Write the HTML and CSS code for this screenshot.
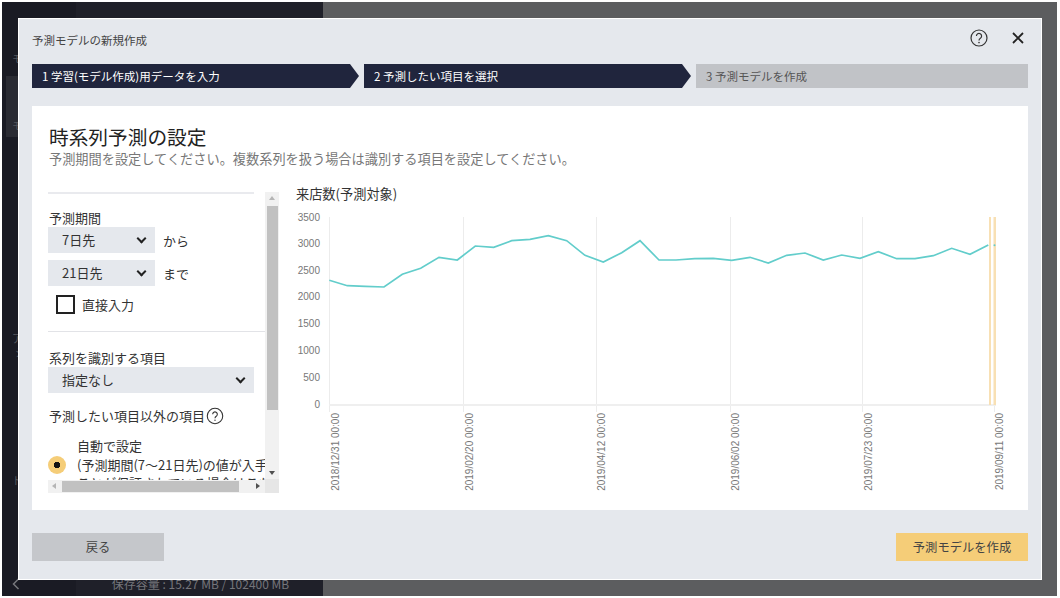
FILE: index.html
```html
<!DOCTYPE html>
<html lang="ja">
<head>
    <meta charset="UTF-8">
    <meta name="viewport" content="width=device-width, initial-scale=1.0">
    <title>予測モデルの新規作成</title>
    <link rel="stylesheet" href="styles.css">
</head>
<body>
    <div class="backdrop">
        <div class="rail">
            <div class="rail-label rail-top">モ</div>
            <div class="rail-active"><div class="rail-label">モ</div></div>
            <div class="rail-label rail-app">ア</div>
            <div class="rail-label rail-sub">シ</div>
            <div class="rail-label rail-doc">ド</div>
            <svg class="rail-back" width="8" height="12" viewBox="0 0 8 12">
                <path d="M6.5 1L1.5 6l5 5" fill="none" stroke="#77787d" stroke-width="1.5"/>
            </svg>
        </div>
        <div class="side">
            <div class="storage">保存容量 : 15.27 MB / 102400 MB</div>
        </div>
        <div class="main"></div>
    </div>

    <div class="dialog">
        <div class="dialog-head">
            <div class="dialog-title">予測モデルの新規作成</div>
            <svg class="help" width="20" height="20" viewBox="0 0 20 20">
                <circle cx="10" cy="10" r="8" fill="none" stroke="#333" stroke-width="1.2"/>
                <path d="M7.4 8a2.6 2.6 0 1 1 4 2.2c-.9.6-1.4 1-1.4 2.2" fill="none" stroke="#333" stroke-width="1.2"/>
                <circle cx="10" cy="14.6" r=".8" fill="#333"/>
            </svg>
            <svg class="close" width="14" height="14" viewBox="0 0 14 14">
                <path d="M2 2l10 10M12 2L2 12" stroke="#222" stroke-width="1.8"/>
            </svg>
        </div>

        <div class="steps">
            <div class="step step-done">1 学習(モデル作成)用データを入力</div>
            <div class="step step-done">2 予測したい項目を選択</div>
            <div class="step step-todo">3 予測モデルを作成</div>
        </div>

        <div class="panel">
            <h1>時系列予測の設定</h1>
            <p class="lead">予測期間を設定してください。複数系列を扱う場合は識別する項目を設定してください。</p>

            <div class="panel-body">
                <div class="form-col">
                    <div class="form-inner">
                        <div class="rule rule-short"></div>
                        <div class="label label-first">予測期間</div>
                        <div class="range-row">
                            <div class="select select-small">7日先<span class="chev"></span></div>
                            <span>から</span>
                        </div>
                        <div class="range-row">
                            <div class="select select-small">21日先<span class="chev"></span></div>
                            <span>まで</span>
                        </div>
                        <div class="check-row">
                            <span class="checkbox"></span>
                            <span>直接入力</span>
                        </div>
                        <div class="rule rule-thin"></div>
                        <div class="label label-series">系列を識別する項目</div>
                        <div class="select select-wide">指定なし<span class="chev"></span></div>
                        <div class="label label-other">予測したい項目以外の項目
                            <svg width="18" height="18" viewBox="0 0 20 20">
                                <circle cx="10" cy="10" r="8.6" fill="none" stroke="#333" stroke-width="1.2"/>
                                <path d="M7.4 8a2.6 2.6 0 1 1 4 2.2c-.9.6-1.4 1-1.4 2.2" fill="none" stroke="#333" stroke-width="1.2"/>
                                <circle cx="10" cy="14.6" r=".8" fill="#333"/>
                            </svg>
                        </div>
                        <div class="radio-row">
                            <span class="radio"></span>
                            <div class="radio-text">自動で設定<br>(予測期間(7〜21日先)の値が入手できる<br>ことが保証されている場合はこちら)</div>
                        </div>
                    </div>

                    <div class="vbar">
                        <span class="arrow-up"></span>
                        <span class="vthumb"></span>
                        <span class="arrow-down"></span>
                    </div>
                    <div class="hbar">
                        <span class="arrow-left"></span>
                        <span class="hthumb"></span>
                        <span class="arrow-right"></span>
                    </div>
                    <div class="corner"></div>
                </div>

                <div class="chart-col">
                    <div class="chart-title">来店数(予測対象)</div>
                    <svg class="chart" width="710" height="290" viewBox="296 205 710 290">
                        <g stroke="#ececec" stroke-width="1">
                            <path d="M329.5 217V412M463.5 217V412M596.5 217V412M730.5 217V412M862.5 217V412M994.5 217V412"/>
                        </g>
                        <path d="M329 405H996" stroke="#efefef" stroke-width="2"/>
                        <rect x="989" y="217" width="2" height="188" fill="#f8e0b4"/>
                        <rect x="993.5" y="217" width="2.5" height="188" fill="#f8e0b4"/>
                        <polyline class="series" points="329.3,280.3 347.3,285.7 365.3,286.3 384,287 402.3,274.3 420.7,268.3 439,257.3 457.3,260 475.3,246 493.7,247.3 511.7,240.7 530,239.3 548.3,235.7 566.7,240.7 585,255.3 603.3,262 621.7,252.7 640,240.7 659,260 676,260 694.7,258.7 713.3,258.3 731.7,260.3 750,257.3 768.3,263 786.7,255.3 805,253 823.3,260 841.7,255 860,258.3 878.3,251.7 896.7,258.7 915,258.7 933.3,255.7 951.7,248.3 970,254.3 988.3,245"/>
                        <circle cx="994.5" cy="245.3" r="1" fill="#62cdcb"/>
                        <g class="y-labels">
                            <text x="320" y="220.5">3500</text>
                            <text x="320" y="246.5">3000</text>
                            <text x="320" y="273.5">2500</text>
                            <text x="320" y="300">2000</text>
                            <text x="320" y="327">1500</text>
                            <text x="320" y="354">1000</text>
                            <text x="320" y="381">500</text>
                            <text x="320" y="408">0</text>
                        </g>
                        <g class="x-labels">
                            <text transform="translate(338.5 413) rotate(-90)">2018/12/31 00:00</text>
                            <text transform="translate(472.5 413) rotate(-90)">2019/02/20 00:00</text>
                            <text transform="translate(605 413) rotate(-90)">2019/04/12 00:00</text>
                            <text transform="translate(739 413) rotate(-90)">2019/06/02 00:00</text>
                            <text transform="translate(871.5 413) rotate(-90)">2019/07/23 00:00</text>
                            <text transform="translate(1002.5 413) rotate(-90)">2019/09/11 00:00</text>
                        </g>
                    </svg>
                </div>
            </div>
        </div>

        <div class="dialog-foot">
            <div class="btn btn-back">戻る</div>
            <div class="btn btn-primary">予測モデルを作成</div>
        </div>
    </div>
</body>
</html>
```

FILE: styles.css
```css
* {
    box-sizing: border-box;
}

body {
    margin: 0;
    width: 1060px;
    height: 598px;
    overflow: hidden;
    background-color: #fff;
    font-family: 'Noto Sans CJK JP', 'Noto Sans', sans-serif;
    font-size: 13px;
    color: #333;
}

/* page behind the dialog */
.backdrop {
    display: flex;
    height: 594px;
    width: 1055px;
    margin: 2px 0 0 2px;
}

.rail {
    width: 74px;
    background-color: #1a1b24;
    padding-top: 48px;
    display: flex;
    flex-direction: column;
}

.rail-label {
    font-size: 11px;
    line-height: 16px;
    padding-left: 10px;
    color: #55565c;
}

.rail-active {
    width: 74px;
    height: 61px;
    margin: 10px 0 0 4px;
    padding-top: 41px;
    background-color: #2a2b33;
}

.rail-active .rail-label {
    padding-left: 6px;
}

.rail-app {
    margin-top: 193px;
}

.rail-sub {
    margin-top: -2px;
    padding-left: 13px;
}

.rail-doc {
    margin-top: 112px;
}

.rail-back {
    margin: auto 0 6px 10px;
}

.side {
    width: 247px;
    background-color: #1f2029;
    display: flex;
    align-items: flex-end;
    justify-content: center;
}

.storage {
    font-size: 12px;
    line-height: 16px;
    margin-bottom: 4px;
    margin-left: 2px;
    color: #74757b;
}

.main {
    flex: 1;
    background-color: #5c5d5f;
}

/* dialog */
.dialog {
    position: absolute;
    left: 18px;
    top: 18px;
    width: 1024px;
    height: 562px;
    padding: 0 13px;
    border: 1px solid #fff;
    background-color: #e5e8ed;
    display: flex;
    flex-direction: column;
}

.dialog-head {
    height: 45px;
    display: flex;
    align-items: center;
}

.dialog-title {
    font-size: 11.5px;
    color: #444;
    flex: 1;
    margin-top: -3px;
}

.help {
    margin-right: 22px;
    margin-top: -8px;
}

.close {
    margin-right: 3px;
    margin-top: -8px;
}

.steps {
    display: flex;
    gap: 5px;
    height: 24px;
}

.step {
    font-size: 11.5px;
    line-height: 25px;
    padding-left: 10px;
}

.step-done {
    width: 327px;
    color: #fff;
    background-color: #20253d;
    clip-path: polygon(0 0, 318px 0, 100% 50%, 318px 100%, 0 100%);
}

.step-todo {
    flex: 1;
    color: #555;
    background-color: #c1c3c7;
}

.panel {
    height: 404px;
    margin-top: 18px;
    padding: 18px 16px 0;
    background-color: #fff;
}

h1 {
    margin: 0;
    font-size: 19.7px;
    font-weight: 400;
    line-height: 26px;
    padding-left: 1px;
    color: #222;
}

.lead {
    margin: 0;
    font-size: 13.2px;
    line-height: 18px;
    padding-left: 1px;
    color: #777;
}

.panel-body {
    display: flex;
    margin-top: 17px;
}

/* left form, scrolled */
.form-col {
    position: relative;
    width: 231px;
    height: 301px;
    margin-top: 7px;
    overflow: hidden;
    flex-shrink: 0;
}

.form-inner {
    width: 217px;
    height: 288px;
    overflow: hidden;
    white-space: nowrap;
}

.rule {
    height: 2px;
    background-color: #e9eaee;
}

.rule-short {
    width: 206px;
}

.rule-thin {
    height: 1px;
    background-color: #e2e3e7;
}

.label {
    padding-left: 1px;
    line-height: 18px;
}

.label-first {
    margin-top: 15px;
}

.label-series {
    margin-top: 17px;
}

.label-other {
    margin-top: 13px;
    display: flex;
    align-items: center;
    gap: 1px;
    height: 20px;
    line-height: 20px;
}

.range-row {
    display: flex;
    align-items: center;
    gap: 8px;
    margin-bottom: 7px;
}

.select {
    position: relative;
    height: 26px;
    line-height: 26px;
    padding-left: 14px;
    background-color: #e5e8ed;
}

.select-small {
    width: 107px;
}

.select-wide {
    width: 206px;
}

.chev {
    position: absolute;
    right: 10px;
    top: 8px;
    width: 7px;
    height: 7px;
    border-right: 2px solid #222;
    border-bottom: 2px solid #222;
    transform: rotate(45deg);
}

.check-row {
    display: flex;
    align-items: center;
    gap: 7px;
    margin: 9px 0 17px 8px;
    height: 19px;
}

.checkbox {
    width: 19px;
    height: 19px;
    border: 2px solid #222;
    background-color: #fff;
}

.radio-row {
    display: flex;
    align-items: flex-start;
    gap: 11px;
    margin-top: 11px;
}

.radio {
    width: 18px;
    height: 18px;
    margin: 19px 0 0 0;
    border-radius: 50%;
    background: radial-gradient(circle, #111 0 3px, #f5cd78 3.5px);
    flex-shrink: 0;
}

.radio-text {
    line-height: 18.5px;
}

/* fake scrollbars */
.vbar {
    position: absolute;
    left: 217px;
    top: 0;
    width: 14px;
    height: 287px;
    background-color: #f1f1f1;
}

.vthumb {
    position: absolute;
    left: 2px;
    top: 14px;
    width: 11px;
    height: 204px;
    background-color: #c1c1c1;
}

.hbar {
    position: absolute;
    left: 0;
    top: 288px;
    width: 217px;
    height: 13px;
    background-color: #f1f1f1;
}

.hthumb {
    position: absolute;
    left: 14px;
    top: 1px;
    width: 177px;
    height: 11px;
    background-color: #c1c1c1;
}

.corner {
    position: absolute;
    left: 217px;
    top: 287px;
    width: 14px;
    height: 14px;
    background-color: #e6e6e6;
}

.arrow-up,
.arrow-down,
.arrow-left,
.arrow-right {
    position: absolute;
    width: 0;
    height: 0;
    border: 3px solid transparent;
}

.arrow-up {
    left: 4px;
    top: 4px;
    border-bottom: 4px solid #b5b5b5;
    border-top: 0;
}

.arrow-down {
    left: 4px;
    bottom: 4px;
    border-top: 4px solid #505050;
    border-bottom: 0;
}

.arrow-left {
    left: 4px;
    top: 3px;
    border-right: 4px solid #b5b5b5;
    border-left: 0;
}

.arrow-right {
    right: 5px;
    top: 3px;
    border-left: 4px solid #505050;
    border-right: 0;
}

/* chart */
.chart-col {
    margin-left: 17px;
}

.chart-title {
    font-size: 13.2px;
    line-height: 18px;
    color: #333;
}

.chart {
    display: block;
    margin-top: 2px;
}

.series {
    fill: none;
    stroke: #62cdcb;
    stroke-width: 1.7;
}

.y-labels text,
.x-labels text {
    font-family: 'Liberation Sans', sans-serif;
    font-size: 10px;
    fill: #777;
    text-anchor: end;
}

.dialog-foot {
    display: flex;
    justify-content: space-between;
    margin-top: 23px;
}

.btn {
    width: 132px;
    height: 28px;
    font-size: 12.3px;
    line-height: 28px;
    text-align: center;
    color: #444;
}

.btn-back {
    background-color: #c5c7cb;
}

.btn-primary {
    background-color: #f5cd78;
}
```
